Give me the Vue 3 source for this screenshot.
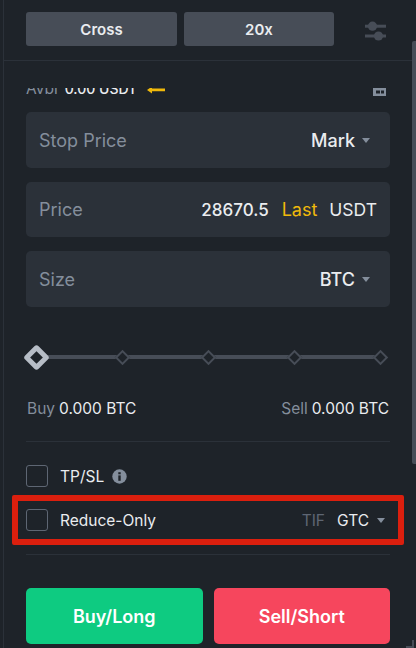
<template>
  <div class="panel">
    <div class="inner">
      <div class="top-bar">
        <button class="top-btn">Cross</button>
        <button class="top-btn">20x</button>
        <svg class="sliders" width="21" height="20" viewBox="0 0 21 20">
          <rect x="0" y="3.7" width="21" height="3" fill="#474d57" />
          <circle cx="7.5" cy="5.2" r="4.6" fill="#474d57" />
          <rect x="0" y="13.5" width="21" height="3" fill="#474d57" />
          <circle cx="13.5" cy="15" r="4.6" fill="#474d57" />
        </svg>
      </div>

      <div class="body">
        <div class="scroller">
          <div class="avbl">
            <span class="muted avbl-label">Avbl</span>
            <span class="avbl-val">0.00 USDT</span>
            <svg class="arrow" width="18" height="8" viewBox="0 0 18 8">
              <path d="M0 4 L5 0.5 V2.5 H18 V5.2 H5 V7.5 Z" fill="#f0b90b" />
            </svg>
            <svg class="calc" width="13" height="16" viewBox="0 0 13 16">
              <rect width="13" height="16" fill="#848e9c" />
              <rect x="2" y="2" width="9" height="3" fill="#1e2329" />
              <rect x="3" y="10.5" width="4" height="3" fill="#1e2329" />
              <rect x="8" y="10.5" width="3" height="3" fill="#1e2329" />
            </svg>
          </div>

          <div class="field">
            <span class="label">Stop Price</span>
            <span class="value">Mark</span>
            <i class="caret"></i>
          </div>
          <div class="field">
            <span class="label">Price</span>
            <span class="value num">28670.5</span>
            <span class="last">Last</span>
            <span class="value unit">USDT</span>
          </div>
          <div class="field">
            <span class="label">Size</span>
            <span class="value">BTC</span>
            <i class="caret"></i>
          </div>

          <div class="slider">
            <div class="track"></div>
            <i class="knob"></i>
            <i v-for="n in 4" :key="n" class="tick"></i>
          </div>

          <div class="amounts">
            <div class="amount"><span class="muted">Buy</span><span>0.000 BTC</span></div>
            <div class="amount"><span class="muted">Sell</span><span>0.000 BTC</span></div>
          </div>

          <div class="opt first">
            <span class="check"></span>
            <span>TP/SL</span>
            <svg class="info" width="15" height="15" viewBox="0 0 15 15">
              <circle cx="7.5" cy="7.5" r="7.2" fill="#848e9c" />
              <rect x="6.3" y="6.4" width="2.4" height="5.4" fill="#1e2329" />
              <rect x="6.3" y="3.2" width="2.4" height="2.1" fill="#1e2329" />
            </svg>
          </div>
          <div class="opt reduce">
            <span class="check"></span>
            <span>Reduce-Only</span>
            <span class="tif">TIF</span>
            <span>GTC</span>
            <i class="caret small"></i>
          </div>
          <div class="divider"></div>

          <div class="actions">
            <button class="action buy">Buy/Long</button>
            <button class="action sell">Sell/Short</button>
          </div>
        </div>
      </div>
    </div>

    <div class="scrollbar"></div>
    <div class="resize"></div>
  </div>
</template>

<script setup>
</script>

<style>
html, body {
  margin: 0;
  background: #1e2329;
}
</style>

<style scoped>
.panel {
  position: relative;
  width: 416px;
  height: 648px;
  overflow: hidden;
  padding-left: 3px;
  box-sizing: border-box;
  background: #1e2329;
  font-family: Inter, "Liberation Sans", sans-serif;
  color: #eaecef;
  font-size: 15.5px;
}

.inner {
  height: 100%;
  border-left: 1px solid #2b3139;
}

.top-bar {
  display: flex;
  align-items: center;
  gap: 7px;
  height: 61px;
  padding: 0 22px 2px;
  border-bottom: 1px solid #2b3139;
  box-sizing: border-box;
}

.top-btn {
  width: 151px;
  height: 33.5px;
  border: 0;
  border-radius: 3px;
  background: #474d57;
  color: #eaecef;
  font-family: inherit;
  font-size: 15px;
  font-weight: 600;
}

.top-btn + .top-btn {
  width: 150px;
}

.sliders {
  margin: 3px 0 0 24px;
}

.body {
  height: 587px;
  padding: 26.5px 26px 0 22px;
  box-sizing: border-box;
}

.scroller {
  height: 100%;
  margin: 0 -14px;
  padding: 0 14px;
  overflow: hidden;
}

.avbl {
  display: flex;
  align-items: center;
  height: 20px;
  margin-top: -9px;
  font-size: 14px;
}

.muted {
  color: #848e9c;
}

.avbl-label {
  margin-right: 7px;
  font-size: 15.5px;
}

.avbl-val {
  font-weight: 500;
}

.arrow {
  margin: 3px 0 0 10px;
}

.calc {
  margin: 0 4px 2px auto;
}

.field {
  display: flex;
  align-items: center;
  height: 55.5px;
  margin-top: 14px;
  padding: 0 13px;
  border-radius: 5px;
  background: #2b3139;
  font-size: 18px;
}

.avbl + .field {
  margin-top: 13.8px;
}

.field .label {
  margin-right: auto;
  color: #848e9c;
}

.value {
  font-weight: 500;
}

.num {
  margin-right: 13px;
  font-size: 17px;
}

.last {
  margin-right: 12px;
  color: #f0b90b;
}

.unit {
  font-size: 17.5px;
  font-weight: 400;
}

.caret {
  margin: 0 7px;
  border-left: 4.5px solid transparent;
  border-right: 4.5px solid transparent;
  border-top: 5px solid #848e9c;
}

.slider {
  position: relative;
  display: flex;
  align-items: center;
  justify-content: space-between;
  height: 28px;
  margin-top: 36.5px;
  padding: 0 10px;
}

.track {
  position: absolute;
  left: 10px;
  right: 10px;
  top: 12px;
  height: 4px;
  background: #474d57;
}

.knob {
  position: relative;
  width: 19px;
  height: 19px;
  margin: 0 -9.5px;
  box-sizing: border-box;
  border: 5px solid #b7bdc6;
  border-radius: 3px;
  background: #1e2329;
  transform: rotate(45deg);
}

.tick {
  position: relative;
  width: 11px;
  height: 11px;
  margin: 0 -5.5px;
  box-sizing: border-box;
  border: 2px solid #474d57;
  background: #1e2329;
  transform: rotate(45deg);
}

.amounts {
  display: flex;
  justify-content: space-between;
  line-height: 20px;
  margin-top: 28px;
  padding: 0 1px 22px;
  border-bottom: 1px solid #2b3139;
}

.amount {
  display: flex;
  gap: 4px;
}

.opt {
  display: flex;
  align-items: center;
  gap: 12px;
  height: 24px;
}

.first {
  margin-top: 22px;
}

.check {
  width: 22px;
  height: 22px;
  box-sizing: border-box;
  border: 1px solid #5e6673;
  border-radius: 3px;
}

.info {
  margin-left: -4px;
}

.reduce {
  height: 50px;
  margin: 7px -14px 0;
  padding: 0 13px 0 8px;
  box-sizing: border-box;
  border: 6px solid #db1f0e;
  border-radius: 2px;
}

.tif {
  margin-left: auto;
  color: #5e6673;
}

.small {
  margin: 0 0 0 -4px;
}

.divider {
  height: 1px;
  margin-top: 9px;
  background: #2b3139;
}

.actions {
  display: flex;
  gap: 11px;
  margin-top: 33px;
}

.action {
  flex: 1;
  height: 56px;
  border: 0;
  border-radius: 5px;
  color: #fff;
  font-family: inherit;
  font-size: 18px;
  font-weight: 600;
}

.buy {
  background: #0ecb81;
}

.sell {
  background: #f6465d;
}

.scrollbar {
  position: absolute;
  right: 0;
  top: 41px;
  width: 4px;
  height: 423px;
  border-radius: 2px 0 0 2px;
  background: #474d57;
}

.resize {
  position: absolute;
  right: 2px;
  bottom: 0;
  width: 8px;
  height: 8px;
  box-sizing: border-box;
  border-right: 2px solid #474d57;
  border-bottom: 2px solid #474d57;
}
</style>
